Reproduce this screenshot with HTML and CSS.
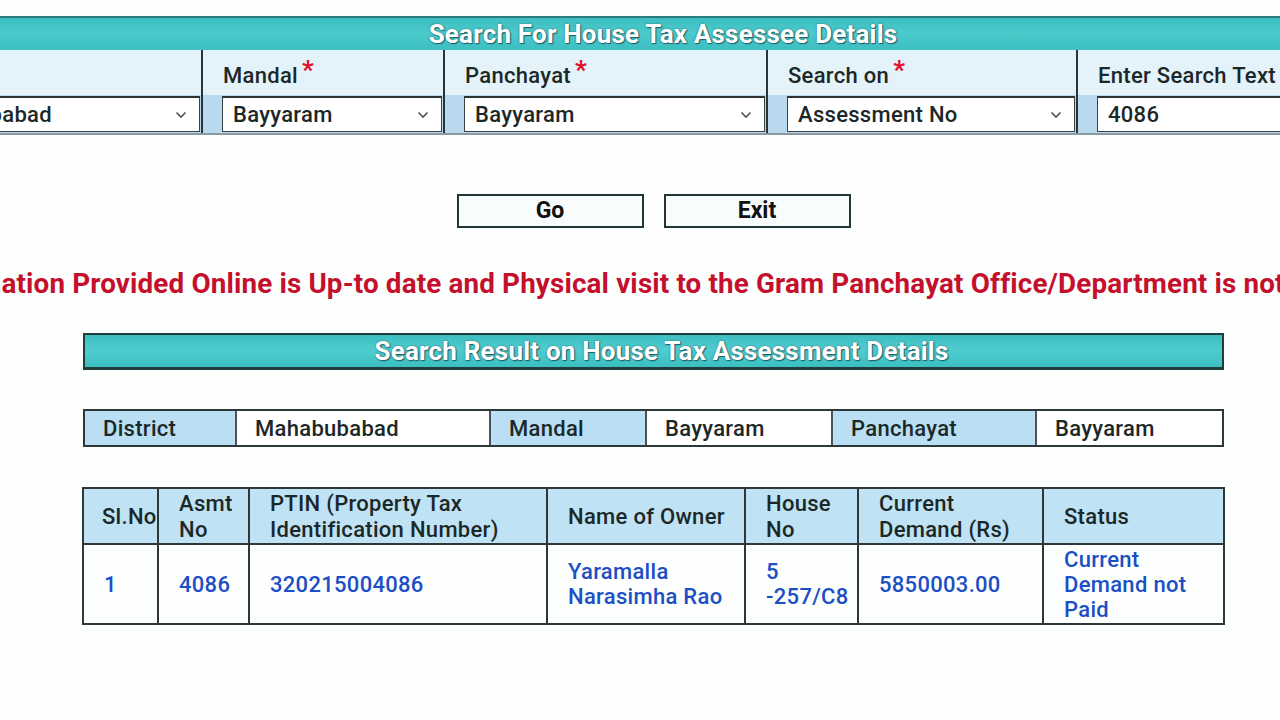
FILE: index.html
```html
<!DOCTYPE html>
<html lang="en">
<head>
<meta charset="utf-8">
<title>Search For House Tax Assessee Details</title>
<link rel="stylesheet" href="styles.css">
</head>
<body>
<div class="search-panel">
  <div class="panel-title">Search For House Tax Assessee Details</div>
  <div class="field-grid">
    <div class="field">
      <div class="field-label">District <span class="req">*</span></div>
      <div class="field-control"><div class="select"><span>Mahabubabad</span><svg class="chev" viewBox="0 0 12 8"><polyline points="1.5,1.5 6,6 10.5,1.5"/></svg></div></div>
    </div>
    <div class="field">
      <div class="field-label">Mandal <span class="req">*</span></div>
      <div class="field-control"><div class="select"><span>Bayyaram</span><svg class="chev" viewBox="0 0 12 8"><polyline points="1.5,1.5 6,6 10.5,1.5"/></svg></div></div>
    </div>
    <div class="field">
      <div class="field-label">Panchayat <span class="req">*</span></div>
      <div class="field-control"><div class="select"><span>Bayyaram</span><svg class="chev" viewBox="0 0 12 8"><polyline points="1.5,1.5 6,6 10.5,1.5"/></svg></div></div>
    </div>
    <div class="field">
      <div class="field-label">Search on <span class="req">*</span></div>
      <div class="field-control"><div class="select"><span>Assessment No</span><svg class="chev" viewBox="0 0 12 8"><polyline points="1.5,1.5 6,6 10.5,1.5"/></svg></div></div>
    </div>
    <div class="field last">
      <div class="field-label">Enter Search Text</div>
      <div class="field-control"><div class="select text-input"><span>4086</span></div></div>
    </div>
  </div>
</div>

<div class="main">
  <div class="actions">
    <button class="btn">Go</button>
    <button class="btn">Exit</button>
  </div>

  <p class="notice">Information Provided Online is Up-to date and Physical visit to the Gram Panchayat Office/Department is not required</p>

  <div class="result-title">Search Result on House Tax Assessment Details</div>

  <div class="info-row">
    <div class="info-cell key">District</div>
    <div class="info-cell">Mahabubabad</div>
    <div class="info-cell key">Mandal</div>
    <div class="info-cell">Bayyaram</div>
    <div class="info-cell key">Panchayat</div>
    <div class="info-cell">Bayyaram</div>
  </div>

  <table class="results">
    <colgroup>
      <col class="c1"><col class="c2"><col class="c3"><col class="c4"><col class="c5"><col class="c6"><col class="c7">
    </colgroup>
    <thead>
      <tr>
        <th>Sl.No</th>
        <th>Asmt No</th>
        <th>PTIN (Property Tax Identification Number)</th>
        <th>Name of Owner</th>
        <th>House No</th>
        <th>Current Demand (Rs)</th>
        <th>Status</th>
      </tr>
    </thead>
    <tbody>
      <tr>
        <td>1</td>
        <td>4086</td>
        <td>320215004086</td>
        <td>Yaramalla Narasimha Rao</td>
        <td>5 -257/C8</td>
        <td>5850003.00</td>
        <td>Current Demand not Paid</td>
      </tr>
    </tbody>
  </table>
</div>
</body>
</html>
```
FILE: styles.css
```css
* { box-sizing: border-box; }

body {
  margin: 0;
  width: 1280px;
  height: 720px;
  overflow: hidden;
  background: #fdfefe;
  font-family: Roboto, "Noto Sans", "Liberation Sans", sans-serif;
  color: #1c2828;
}

/* ---------- search panel ---------- */
.search-panel {
  margin: 16px 0 0 -122px;
  width: 1570px;
}

.panel-title {
  height: 34px;
  border-top: 2px solid #2c7c7e;
  background: linear-gradient(#3cbec1 0%, #4ccacc 45%, #3cbfc2 100%);
  color: #fff;
  font-weight: 700;
  font-size: 26px;
  letter-spacing: 0.2px;
  line-height: 32px;
  text-align: center;
  text-shadow: 1px 1px 1px #1f5e64, 0 0 2px #2a6d72;
}

.field-grid {
  display: grid;
  grid-template-columns: 325px 242px 323px 310px 370px;
  border-bottom: 2px solid #8a9aa0;
}

.field {
  display: flex;
  flex-direction: column;
  border-right: 2px solid #2b3434;
}
.field.last { border-right: 0; }

.field-label {
  height: 45px;
  display: flex;
  align-items: center;
  padding: 6px 0 0 20px;
  background: #e4f3fa;
  font-weight: 500;
  font-size: 22px;
  letter-spacing: 0.3px;
}

.req {
  color: #e3102c;
  font-size: 26px;
  font-weight: 700;
  margin: -12px 0 0 4px;
}

.field-control {
  height: 38px;
  padding: 1px 1px 1px 19px;
  background: #b9d9ee;
}

.select {
  height: 100%;
  display: flex;
  align-items: center;
  justify-content: space-between;
  padding: 0 12px 0 10px;
  background: #fff;
  border: 1px solid #3a4444;
  border-top: 2px solid #2a3232;
  font-weight: 500;
  font-size: 22px;
  letter-spacing: 0.3px;
}

.chev {
  width: 12px;
  height: 8px;
  fill: none;
  stroke: #4a5555;
  stroke-width: 1.6;
}

/* ---------- main ---------- */
.main {
  width: 1307px;
}

.actions {
  display: flex;
  justify-content: center;
  gap: 20px;
  margin-top: 59px;
}

.btn {
  width: 187px;
  height: 34px;
  padding: 0;
  background: #f8fcfc;
  border: 2px solid #1f3536;
  color: #111;
  font-family: inherit;
  font-weight: 700;
  font-size: 23px;
  line-height: 28px;
}

.notice {
  margin: 40px 0 0 -83px;
  white-space: nowrap;
  color: #c4102c;
  font-weight: 700;
  font-size: 27.8px;
  letter-spacing: 0.15px;
  line-height: 32px;
}

.result-title {
  width: 1141px;
  height: 37px;
  margin: 33px auto 0;
  padding-left: 16px;
  border: 2px solid #233c3c;
  border-width: 2px 2px 3px;
  background: linear-gradient(#3cbec1 0%, #50cccf 45%, #3cbfc2 100%);
  color: #fff;
  font-weight: 700;
  font-size: 26px;
  letter-spacing: 0.2px;
  line-height: 32px;
  text-align: center;
  text-shadow: 1px 1px 1px #1f5e64, 0 0 2px #2a6d72;
}

.info-row {
  width: 1141px;
  height: 38px;
  margin: 39px auto 0;
  display: grid;
  grid-template-columns: 152px 254px 156px 186px 204px 185px;
  border: 2px solid #2e3838;
}

.info-cell {
  display: flex;
  align-items: center;
  padding-left: 18px;
  border-right: 2px solid #4a5454;
  background: #fff;
  font-weight: 500;
  font-size: 22px;
  letter-spacing: 0.3px;
}
.info-cell:last-child { border-right: 0; }
.info-cell.key { background: #badff5; }

.results {
  width: 1141px;
  margin: 40px auto 0;
  border-collapse: collapse;
  table-layout: fixed;
}
.results .c1 { width: 75px; }
.results .c2 { width: 91px; }
.results .c3 { width: 298px; }
.results .c4 { width: 198px; }
.results .c5 { width: 113px; }
.results .c6 { width: 185px; }
.results .c7 { width: 181px; }

.results th,
.results td {
  border: 2px solid #2e3838;
  padding: 0 8px 0 20px;
  text-align: left;
  vertical-align: middle;
  font-size: 22px;
  letter-spacing: 0.3px;
}

.results th {
  height: 55px;
  background: #bfe2f5;
  font-weight: 500;
  line-height: 26px;
  padding-top: 2px;
}
.results th:first-child { padding-left: 18px; padding-right: 0; }

.results td {
  height: 80px;
  color: #1c4fc4;
  font-weight: 500;
  line-height: 25px;
}
```
